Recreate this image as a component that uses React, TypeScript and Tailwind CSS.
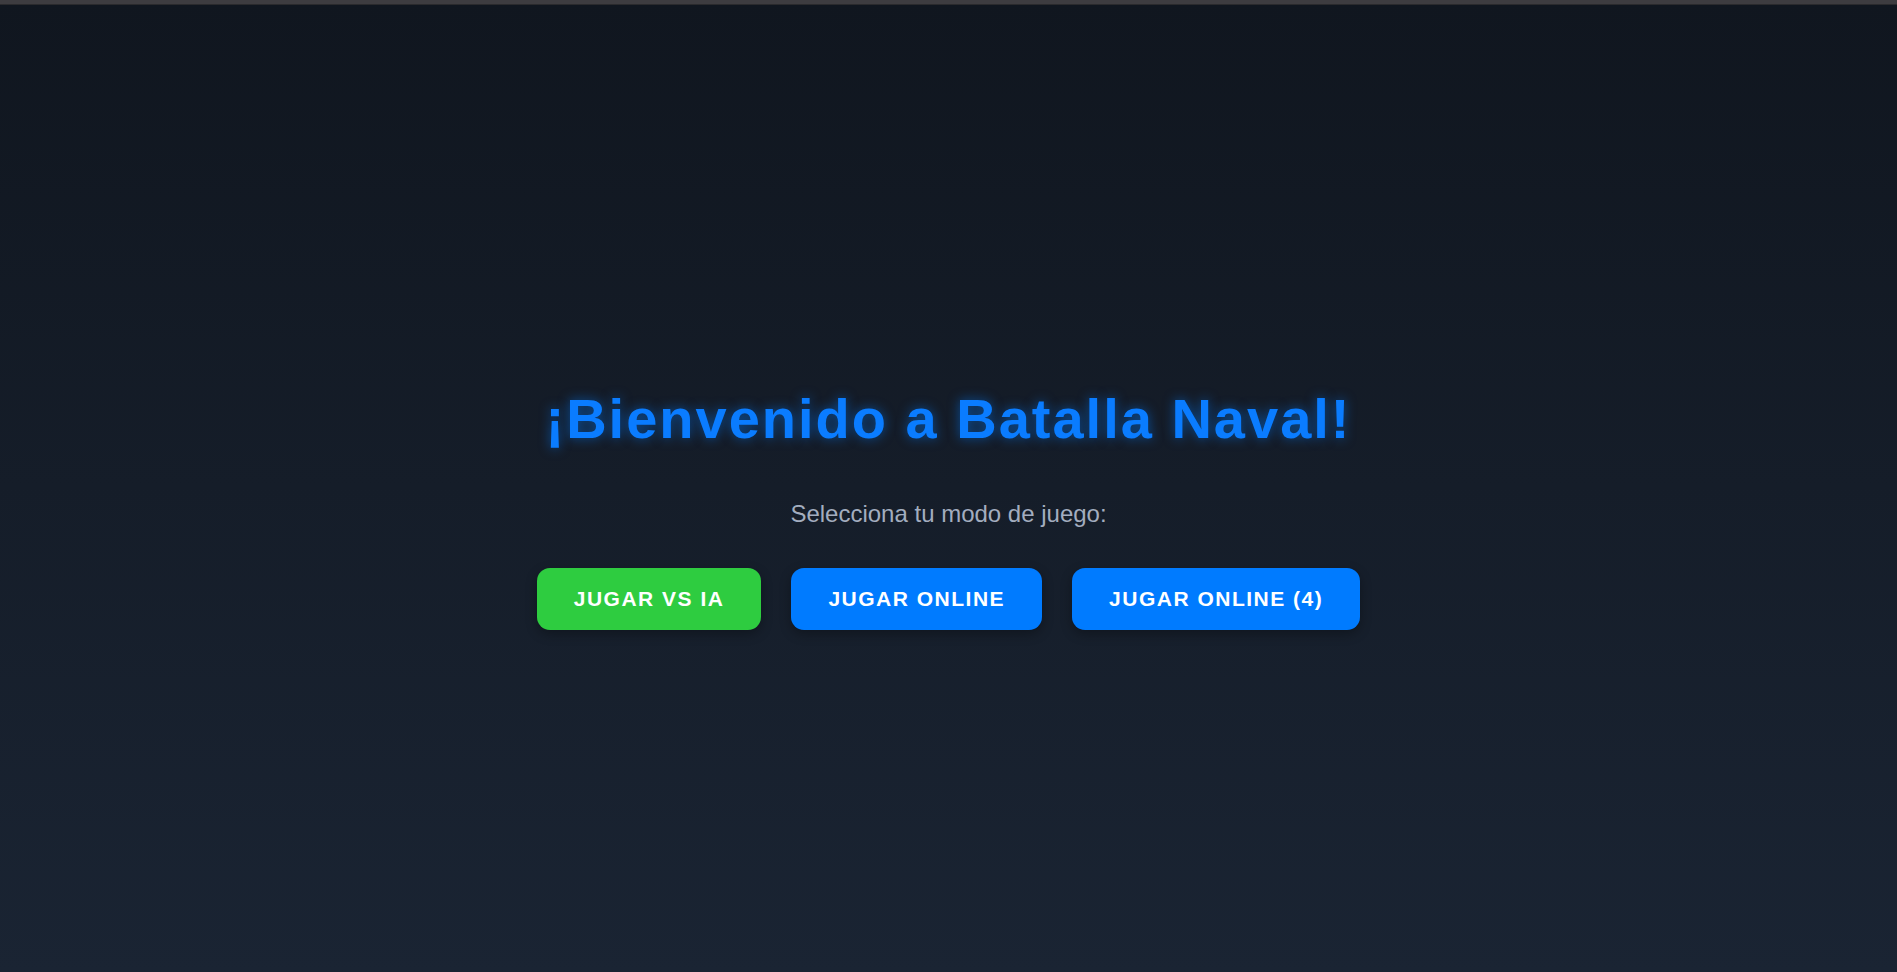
const modes = [
  { id: "ai", label: "Jugar vs IA", color: "bg-[#2ecc40]" },
  { id: "online", label: "Jugar Online", color: "bg-[#007bff]" },
  { id: "online4", label: "Jugar Online (4)", color: "bg-[#007bff]" },
];

export default function App() {
  return (
    <div className="min-h-screen flex flex-col bg-[linear-gradient(180deg,#10161f_0%,#1a2433_100%)] font-['Liberation_Sans',Arial,sans-serif]">
      <div className="h-[4px] bg-[#3d3c40] border-b border-[#2a2a2d] box-content" />

      <main className="h-[967px] flex flex-col items-center justify-center pt-[39px]">
        <h1 className="text-[56px] leading-[64px] font-bold tracking-[2px] text-[#0a7cff] [text-shadow:0_0_12px_rgba(0,123,255,0.55)]">
          ¡Bienvenido a Batalla Naval!
        </h1>

        <p className="mt-[49px] text-[24px] leading-[28px] text-[#a3adbf]">
          Selecciona tu modo de juego:
        </p>

        <div className="mt-[40px] flex items-center gap-[30px]">
          {modes.map((m) => (
            <button
              key={m.id}
              className={`${m.color} text-white font-bold uppercase text-[21px] leading-[24px] tracking-[1.5px] px-[37px] py-[19px] rounded-[13px] shadow-[0_4px_12px_rgba(0,0,0,0.3)] cursor-pointer`}
            >
              {m.label}
            </button>
          ))}
        </div>
      </main>
    </div>
  );
}
